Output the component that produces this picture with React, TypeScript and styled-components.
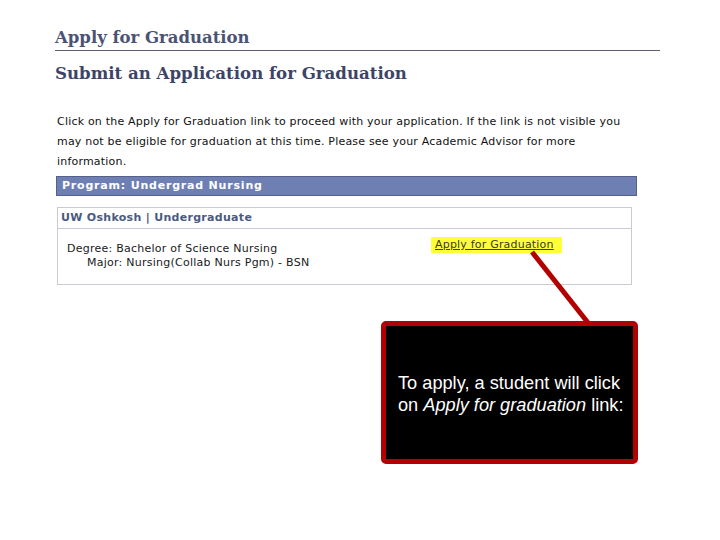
import styled, { createGlobalStyle } from 'styled-components';

const GlobalStyle = createGlobalStyle`
  html, body {
    margin: 0;
    padding: 0;
    background: #ffffff;
  }
  body {
    font-family: 'DejaVu Sans', Verdana, sans-serif;
  }
`;

function App() {
  return (
    <>
      <GlobalStyle />
      <Page>
        <PageTitle>Apply for Graduation</PageTitle>
        <SubTitle>Submit an Application for Graduation</SubTitle>
        <Intro>
          Click on the Apply for Graduation link to proceed with your application. If the link is not visible you
          may not be eligible for graduation at this time. Please see your Academic Advisor for more
          information.
        </Intro>
        <ProgramBar>Program: Undergrad Nursing</ProgramBar>
        <CareerBox>
          <CareerHeader>UW Oshkosh | Undergraduate</CareerHeader>
          <CareerBody>
            <DegreeInfo>
              <DegreeLine>Degree: Bachelor of Science Nursing</DegreeLine>
              <DegreeLine $indent>Major: Nursing(Collab Nurs Pgm) - BSN</DegreeLine>
            </DegreeInfo>
            <ApplyLink href="#">Apply for Graduation</ApplyLink>
          </CareerBody>
        </CareerBox>

        <Pointer width="720" height="540" viewBox="0 0 720 540">
          <line x1="532" y1="252" x2="589" y2="324" stroke="#b30000" strokeWidth="5" />
        </Pointer>
        <Callout>
          <CalloutText>
            To apply, a student will click on <Emph>Apply for graduation</Emph> link:
          </CalloutText>
        </Callout>
      </Page>
    </>
  );
}

const Page = styled.div`
  position: relative;
  width: 720px;
  height: 540px;
  box-sizing: border-box;
  padding: 28px 60px 0 55px;
  overflow: hidden;
`;

const PageTitle = styled.h1`
  margin: 0;
  font-family: 'DejaVu Serif', 'Liberation Serif', serif;
  font-weight: bold;
  font-size: 16.5px;
  line-height: 20px;
  color: #4b5374;
  padding-bottom: 2px;
  border-bottom: 1px solid #5c5f6e;
  width: 605px;
`;

const SubTitle = styled.h2`
  margin: 11px 0 0;
  font-family: 'DejaVu Serif', 'Liberation Serif', serif;
  font-weight: bold;
  font-size: 16.6px;
  line-height: 22px;
  color: #3d4468;
`;

const Intro = styled.p`
  margin: 28px 0 0 2px;
  width: 572px;
  font-size: 11px;
  letter-spacing: 0.2px;
  line-height: 20px;
  color: #111;
`;

const ProgramBar = styled.div`
  margin: 4px 0 0 1px;
  width: 581px;
  height: 20px;
  box-sizing: border-box;
  background: #6e7fb4;
  border: 1px solid #56608a;
  color: #ffffff;
  font-weight: bold;
  font-size: 11px;
  letter-spacing: 0.8px;
  line-height: 18px;
  padding: 0 0 0 5px;
`;

const CareerBox = styled.div`
  margin: 11px 0 0 2px;
  width: 575px;
  height: 78px;
  box-sizing: border-box;
  border: 1px solid #c9cbd3;
`;

const CareerHeader = styled.div`
  height: 21px;
  box-sizing: border-box;
  border-bottom: 1px solid #c9cbd3;
  padding: 2px 0 0 3px;
  font-size: 11px;
  font-weight: bold;
  letter-spacing: 0.3px;
  color: #4a5a82;
  line-height: 16px;
`;

const CareerBody = styled.div`
  display: flex;
  align-items: flex-start;
  padding: 8px 0 0 9px;
`;

const DegreeInfo = styled.div`
  width: 364px;
  padding-top: 5px;
`;

const DegreeLine = styled.div<{ $indent?: boolean }>`
  font-size: 11px;
  letter-spacing: 0.25px;
  line-height: 14px;
  color: #1a1a1a;
  padding-left: ${(p) => (p.$indent ? '20px' : '0')};
`;

const ApplyLink = styled.a`
  display: inline-block;
  background: #ffff3a;
  color: #3b3b2a;
  font-size: 11px;
  letter-spacing: 0.2px;
  line-height: 16px;
  padding: 0 8px 0 4px;
  text-decoration: underline;
`;

const Pointer = styled.svg`
  position: absolute;
  left: 0;
  top: 0;
  pointer-events: none;
`;

const Callout = styled.div`
  position: absolute;
  left: 381px;
  top: 321px;
  width: 257px;
  height: 143px;
  box-sizing: border-box;
  background: #000000;
  border: 5px solid #b30000;
  border-radius: 5px;
  display: flex;
  align-items: center;
  padding: 0 0 0 12px;
`;

const CalloutText = styled.div`
  font-family: 'Liberation Sans', Arial, sans-serif;
  font-size: 18.2px;
  line-height: 22px;
  color: #ffffff;
  width: 234px;
  margin-top: 2px;
`;

const Emph = styled.i`
  font-style: italic;
`;

export default App;
